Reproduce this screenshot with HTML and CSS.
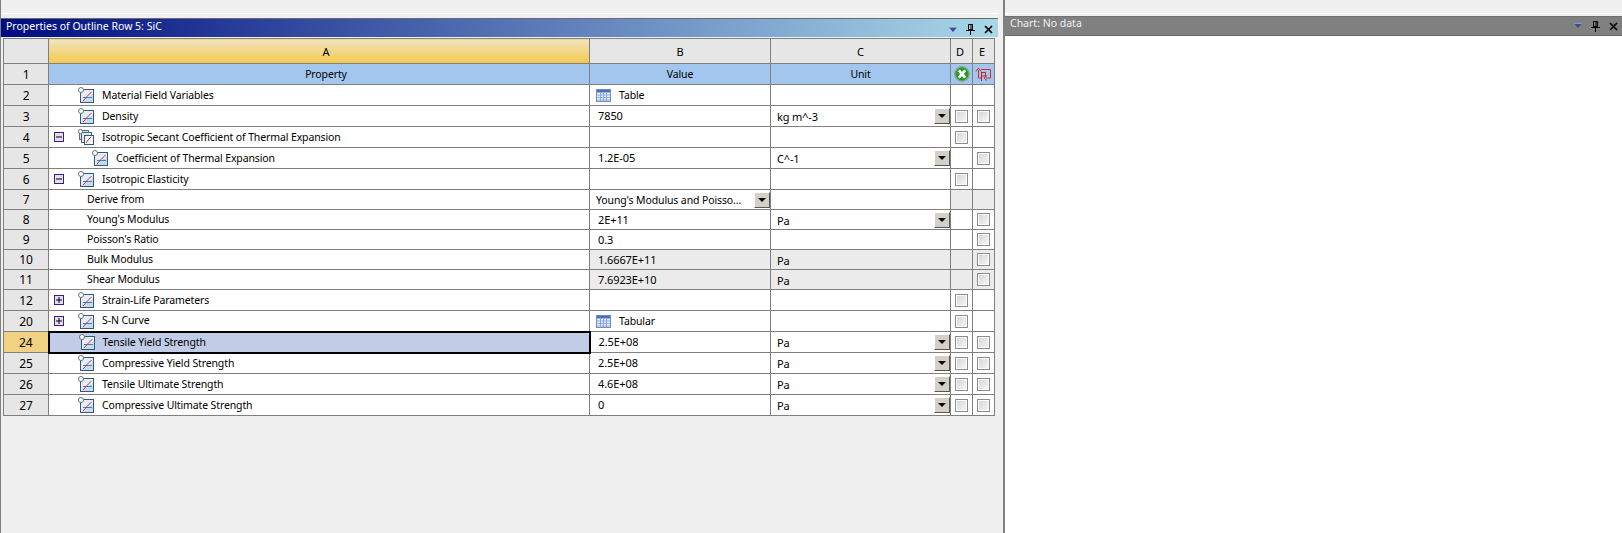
FILE: index.html
```html
<!DOCTYPE html>
<html lang="en">
<head>
<meta charset="utf-8">
<title>Properties of Outline Row 5: SiC</title>
<link rel="stylesheet" href="styles.css">
</head>
<body>
<svg class="defs" aria-hidden="true">
  <symbol id="prop" viewBox="0 0 16 16">
    <rect x="2.500" y="2.500" width="13" height="13" fill="#e4eef8" stroke="#34587e"/>
    <path d="M3 15h12V7z" fill="#bcd6ee" opacity=".8"/>
    <circle cx="3" cy="3" r="2.500" fill="#fff" stroke="#68727c"/>
    <path d="M5 10.500h9" stroke="#2f86cc" fill="none"/>
    <path d="M5 14L8.500 10l5-5" stroke="#e0262c" fill="none"/>
  </symbol>
  <symbol id="multi" viewBox="0 0 16 16">
    <rect x="1.500" y="1.500" width="9" height="9" fill="#cfdae6" stroke="#5b7088"/>
    <rect x="3.500" y="3.500" width="10" height="10" fill="#dde7f0" stroke="#4d6580"/>
    <rect x="6.500" y="6.500" width="9" height="9" fill="#f4f8fc" stroke="#34587e"/>
    <circle cx="2.500" cy="2.500" r="2.100" fill="#fff" stroke="#68727c"/>
    <path d="M8 14l2-3 3-3" stroke="#e0262c" fill="none"/>
  </symbol>
  <symbol id="tbl" viewBox="0 0 15 13">
    <rect x=".5" y=".5" width="14" height="12" fill="#eaf1fb" stroke="#6f8fc4"/>
    <rect x="1" y="1" width="13" height="2.500" fill="#4a6fc0"/>
    <path d="M1 6h13M1 8.500h13M1 11h13M4.500 4v8M7.500 4v8M10.500 4v8" stroke="#8aa8dc" fill="none"/>
  </symbol>
  <symbol id="minus" viewBox="0 0 10 10">
    <rect x=".5" y=".5" width="9" height="9" fill="#e4e0e8" stroke="#3c1a8c"/>
    <path d="M2 5h6" stroke="#000" fill="none"/>
  </symbol>
  <symbol id="plus" viewBox="0 0 10 10">
    <rect x=".5" y=".5" width="9" height="9" fill="#e4e0e8" stroke="#3c1a8c"/>
    <path d="M2 5h6M5 2v6" stroke="#000" fill="none"/>
  </symbol>
  <symbol id="ok" viewBox="0 0 16 16">
    <circle cx="8" cy="8" r="7.200" fill="#2a962a" stroke="#7fae7f" stroke-width="1.500"/>
    <path d="M4.800 4.300l6.400 7.400M11.200 4.300l-6.400 7.400" stroke="#fff" stroke-width="2.800" fill="none"/>
  </symbol>
  <symbol id="loop" viewBox="0 0 16 14">
    <path d="M3.500 3v8h2.500M6 2.500h9.500v8.500H11" stroke="#d42a30" fill="none"/>
    <path d="M1 4.500l2.500-3.500 2.500 3.500M12 8.500l-3 2.500 3 2.500" stroke="#d42a30" fill="none"/>
    <path d="M6.500 5.500h4v3.500h-3.500M6.500 5v9" stroke="#c02028" fill="none"/>
  </symbol>
  <symbol id="menu" viewBox="0 0 8 6">
    <path d="M0 0h8v1H0z" fill="#8d96c8"/>
    <path d="M.5 1h7L4 5z" fill="#3b4a9c"/>
  </symbol>
  <symbol id="pin" viewBox="0 0 9 11">
    <path d="M2.500 .5h4v5h-4zM5 1v5" fill="none" stroke="#000"/>
    <path d="M0 6.500h9M4.500 7v4" stroke="#000" fill="none"/>
  </symbol>
  <symbol id="close" viewBox="0 0 9 9">
    <path d="M1 1l7 7M8 1L1 8" stroke="#000" stroke-width="1.700" fill="none"/>
  </symbol>
</svg>

<div class="app">
  <section class="pane-left">
    <div class="strip"></div>
    <header class="title title-blue">
      <span class="title-text">Properties of Outline Row 5: SiC</span>
      <span class="title-tools">
        <svg class="t-menu"><use href="#menu"/></svg>
        <svg class="t-pin"><use href="#pin"/></svg>
        <svg class="t-close"><use href="#close"/></svg>
      </span>
    </header>
    <div class="table-wrap">
      <table class="grid">
        <colgroup>
          <col class="c-h"><col class="c-a"><col class="c-b"><col class="c-c"><col class="c-d"><col class="c-e">
        </colgroup>
        <tr class="r-head">
          <td class="rh"></td>
          <td class="col-a head-a">A</td>
          <td class="head-b">B</td>
          <td class="head-b">C</td>
          <td class="head-b head-n">D</td>
          <td class="head-b head-n">E</td>
        </tr>
        <tr class="r-21 r-title">
          <td class="rh">1</td>
          <td class="col-a">Property</td>
          <td>Value</td>
          <td>Unit</td>
          <td><svg class="i-ok"><use href="#ok"/></svg></td>
          <td><svg class="i-loop"><use href="#loop"/></svg></td>
        </tr>
        <tr class="r-21">
          <td class="rh">2</td>
          <td><div class="prop"><span class="gut"></span><svg class="ico"><use href="#prop"/></svg><span class="lbl">Material Field Variables</span></div></td>
          <td><div class="val val-ico"><svg class="i-tbl"><use href="#tbl"/></svg><span class="lbl">Table</span></div></td>
          <td></td><td></td><td></td>
        </tr>
        <tr class="r-21">
          <td class="rh">3</td>
          <td><div class="prop"><span class="gut"></span><svg class="ico"><use href="#prop"/></svg><span class="lbl">Density</span></div></td>
          <td><div class="val">7850</div></td>
          <td><div class="unit"><span>kg m^-3</span><i class="drop"></i></div></td>
          <td><i class="chk"></i></td><td><i class="chk"></i></td>
        </tr>
        <tr class="r-21">
          <td class="rh">4</td>
          <td><div class="prop"><span class="gut"><svg class="tog"><use href="#minus"/></svg></span><svg class="ico"><use href="#multi"/></svg><span class="lbl">Isotropic Secant Coefficient of Thermal Expansion</span></div></td>
          <td></td><td></td>
          <td><i class="chk"></i></td><td></td>
        </tr>
        <tr class="r-21">
          <td class="rh">5</td>
          <td><div class="prop lvl2"><span class="gut"></span><svg class="ico"><use href="#prop"/></svg><span class="lbl">Coefficient of Thermal Expansion</span></div></td>
          <td><div class="val">1.2E-05</div></td>
          <td><div class="unit"><span>C^-1</span><i class="drop"></i></div></td>
          <td></td><td><i class="chk"></i></td>
        </tr>
        <tr class="r-21">
          <td class="rh">6</td>
          <td><div class="prop"><span class="gut"><svg class="tog"><use href="#minus"/></svg></span><svg class="ico"><use href="#prop"/></svg><span class="lbl">Isotropic Elasticity</span></div></td>
          <td></td><td></td>
          <td><i class="chk"></i></td><td></td>
        </tr>
        <tr class="r-20">
          <td class="rh">7</td>
          <td><div class="sub">Derive from</div></td>
          <td><div class="unit val-drop"><span>Young's Modulus and Poisso...</span><i class="drop"></i></div></td>
          <td></td><td class="shade"></td><td class="shade"></td>
        </tr>
        <tr class="r-20">
          <td class="rh">8</td>
          <td><div class="sub">Young's Modulus</div></td>
          <td><div class="val">2E+11</div></td>
          <td><div class="unit"><span>Pa</span><i class="drop"></i></div></td>
          <td></td><td><i class="chk"></i></td>
        </tr>
        <tr class="r-20">
          <td class="rh">9</td>
          <td><div class="sub">Poisson's Ratio</div></td>
          <td><div class="val">0.3</div></td>
          <td></td><td></td><td><i class="chk"></i></td>
        </tr>
        <tr class="r-20">
          <td class="rh">10</td>
          <td><div class="sub">Bulk Modulus</div></td>
          <td class="shade"><div class="val">1.6667E+11</div></td>
          <td class="shade"><div class="unit"><span>Pa</span></div></td>
          <td class="shade"></td><td class="shade"><i class="chk"></i></td>
        </tr>
        <tr class="r-20">
          <td class="rh">11</td>
          <td><div class="sub">Shear Modulus</div></td>
          <td class="shade"><div class="val">7.6923E+10</div></td>
          <td class="shade"><div class="unit"><span>Pa</span></div></td>
          <td class="shade"></td><td class="shade"><i class="chk"></i></td>
        </tr>
        <tr class="r-21">
          <td class="rh">12</td>
          <td><div class="prop"><span class="gut"><svg class="tog"><use href="#plus"/></svg></span><svg class="ico"><use href="#prop"/></svg><span class="lbl">Strain-Life Parameters</span></div></td>
          <td></td><td></td>
          <td><i class="chk"></i></td><td></td>
        </tr>
        <tr class="r-21">
          <td class="rh">20</td>
          <td><div class="prop"><span class="gut"><svg class="tog"><use href="#plus"/></svg></span><svg class="ico"><use href="#prop"/></svg><span class="lbl">S-N Curve</span></div></td>
          <td><div class="val val-ico"><svg class="i-tbl"><use href="#tbl"/></svg><span class="lbl">Tabular</span></div></td>
          <td></td>
          <td><i class="chk"></i></td><td></td>
        </tr>
        <tr class="r-21">
          <td class="rh rh-sel">24</td>
          <td class="sel"><div class="prop"><span class="gut"></span><svg class="ico"><use href="#prop"/></svg><span class="lbl">Tensile Yield Strength</span></div></td>
          <td><div class="val">2.5E+08</div></td>
          <td><div class="unit"><span>Pa</span><i class="drop"></i></div></td>
          <td><i class="chk"></i></td><td><i class="chk"></i></td>
        </tr>
        <tr class="r-21">
          <td class="rh">25</td>
          <td><div class="prop"><span class="gut"></span><svg class="ico"><use href="#prop"/></svg><span class="lbl">Compressive Yield Strength</span></div></td>
          <td><div class="val">2.5E+08</div></td>
          <td><div class="unit"><span>Pa</span><i class="drop"></i></div></td>
          <td><i class="chk"></i></td><td><i class="chk"></i></td>
        </tr>
        <tr class="r-21">
          <td class="rh">26</td>
          <td><div class="prop"><span class="gut"></span><svg class="ico"><use href="#prop"/></svg><span class="lbl">Tensile Ultimate Strength</span></div></td>
          <td><div class="val">4.6E+08</div></td>
          <td><div class="unit"><span>Pa</span><i class="drop"></i></div></td>
          <td><i class="chk"></i></td><td><i class="chk"></i></td>
        </tr>
        <tr class="r-21">
          <td class="rh">27</td>
          <td><div class="prop"><span class="gut"></span><svg class="ico"><use href="#prop"/></svg><span class="lbl">Compressive Ultimate Strength</span></div></td>
          <td><div class="val">0</div></td>
          <td><div class="unit"><span>Pa</span><i class="drop"></i></div></td>
          <td><i class="chk"></i></td><td><i class="chk"></i></td>
        </tr>
      </table>
    </div>
  </section>
  <section class="pane-right">
    <div class="strip strip-right"></div>
    <header class="title title-gray">
      <span class="title-text title-text-gray">Chart: No data</span>
      <span class="title-tools tools-gray">
        <svg class="t-menu"><use href="#menu"/></svg>
        <svg class="t-pin"><use href="#pin"/></svg>
        <svg class="t-close"><use href="#close"/></svg>
      </span>
    </header>
    <div class="chart-body"></div>
  </section>
</div>
</body>
</html>
```

FILE: styles.css
```css
* { box-sizing: border-box; }
html, body { margin: 0; height: 100%; overflow: hidden; }
body {
  background: #f0f0f0;
  font-family: "Noto Sans", "Liberation Sans", Arial, sans-serif;
  font-size: 10.5px;
  line-height: 13px;
  letter-spacing: -0.12px;
  color: #000;
}
.defs { display: none; }
.app { display: flex; height: 533px; }

.pane-left {
  width: 998px;
  border-left: 1px solid #808080;
  flex: none;
}
.pane-right {
  flex: 1;
  margin-left: 5px;
  border-left: 2px solid #808080;
  display: flex;
  flex-direction: column;
}
.strip {
  height: 18px;
  background: linear-gradient(#f0f0f0 0 13px, #fff 13px 14px, #f0f0f0 14px);
}
.strip-right { height: 16px; }

.title {
  display: flex;
  justify-content: space-between;
  border-top: 1px solid #6a6a6a;
  height: 19px;
  color: #fff;
}
.title-blue { background: linear-gradient(90deg, #000c80, #a8d8e8); }
.title-gray {
  height: 20px;
  background: #808080;
  border-top-color: #707070;
  border-bottom: 1px solid #6a6a6a;
}
.title-text { padding: 0 0 0 5px; line-height: 13px; margin-top: 1px; letter-spacing: 0; }
.title-text-gray { padding-left: 5px; color: #f2f2f2; margin-top: 0; }
.title-tools { display: flex; align-items: center; padding: 3px 5px 0 0; gap: 9px; }
.tools-gray { padding-top: 0; padding-right: 4px; }
.t-menu { width: 8px; height: 6px; }
.t-pin { width: 9px; height: 11px; }
.t-close { width: 9px; height: 9px; }

.table-wrap { padding: 1px 0 0 2px; }
.grid {
  border-collapse: collapse;
  table-layout: fixed;
  width: 991px;
}
.c-h { width: 45px; }
.c-a { width: 541px; }
.c-b { width: 181px; }
.c-c { width: 180px; }
.c-d { width: 22px; }
.c-e { width: 22px; }
.grid td {
  border: 1px solid #808080;
  padding: 0;
  vertical-align: middle;
  background: #fff;
}
.r-head { height: 25px; }
.r-21 { height: 21px; }
.r-20 { height: 20px; }

.grid td.rh { background: #e6e6e6; text-align: center; font-size: 12px; }
.grid td.rh-sel { background: #f0d282; }
.r-head td { text-align: center; font-size: 11px; }
.grid td.head-a { background: linear-gradient(#efe4c0, #f5c94c); padding-left: 14px; }
.grid td.head-b { background: #e6e6e6; }
.grid td.head-n { padding-right: 3px; }
.r-title td { text-align: center; }
.grid .r-title td:not(.rh) { background: #a3c6ee; }
.grid .r-title td.col-a { padding-left: 14px; }
.grid td.shade { background: #ebebeb; }
.grid td.sel {
  background: #c1cde6;
  border: 2px solid #000;
}

.prop { display: flex; align-items: center; padding-left: 5px; }
.lvl2 { padding-left: 19px; }
.gut { width: 24px; display: flex; flex: none; }
.tog { width: 10px; height: 10px; }
.ico { width: 16px; height: 16px; margin-right: 8px; flex: none; }
.sub { padding-left: 38px; }
.val { display: flex; align-items: center; padding: 0 0 1px 8px; font-size: 11px; letter-spacing: -0.1px; }
.val-ico { padding: 0 0 0 6px; }
.lbl { font-size: 10.5px; letter-spacing: -0.12px; }
.i-tbl { width: 15px; height: 13px; margin-right: 8px; }
.unit {
  display: flex;
  justify-content: space-between;
  align-items: center;
  padding-left: 6px;
  height: 16px;
  font-size: 11px;
  letter-spacing: -0.15px;
}
.unit > span { padding-top: 1px; }
.val-drop { font-size: 10.5px; letter-spacing: -0.12px; }
.val-drop > span { padding: 1px 0 0; }
.drop {
  display: block;
  width: 16px;
  height: 16px;
  background: #d4d0c8;
  border-style: solid;
  border-width: 1px;
  border-color: #fff #555 #555 #fff;
  position: relative;
}
.drop::after {
  content: "";
  position: absolute;
  left: 3px;
  top: 5px;
  border: 4px solid transparent;
  border-top: 4px solid #000;
  border-bottom: 0;
}
.chk {
  display: block;
  width: 13px;
  height: 13px;
  margin: 0 auto;
  border: 1px solid #8c8c8c;
  background: linear-gradient(135deg, #d4d4d4, #f8f8f8);
  outline: 1px solid #fff;
  outline-offset: -2px;
}
.i-ok { width: 16px; height: 16px; display: block; margin: 0 auto; }
.i-loop { width: 16px; height: 14px; display: block; margin: 0 0 0 2px; }
.chart-body { flex: 1; background: #fff; }
```
